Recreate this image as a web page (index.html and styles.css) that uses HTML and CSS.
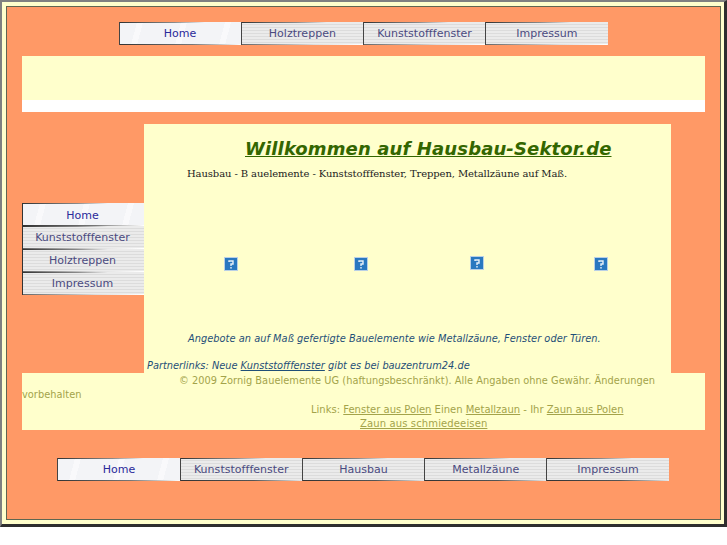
FILE: index.html

```html
<!DOCTYPE html>
<html lang="de">
<head>
    <meta charset="UTF-8">
    <title>Hausbau-Sektor.de</title>
    <link rel="stylesheet" href="styles.css">
</head>
<body>
    <div class="frame">
        <div class="page">
            <nav class="menu menu-top">
                <a class="tab active" href="#">Home</a>
                <a class="tab" href="#">Holztreppen</a>
                <a class="tab" href="#">Kunststofffenster</a>
                <a class="tab" href="#">Impressum</a>
            </nav>

            <div class="banner">
                <div class="banner-fill"></div>
            </div>

            <div class="middle">
                <nav class="menu-side">
                    <a class="tab active" href="#">Home</a>
                    <a class="tab" href="#">Kunststofffenster</a>
                    <a class="tab" href="#">Holztreppen</a>
                    <a class="tab" href="#">Impressum</a>
                </nav>

                <main class="content">
                    <h1 class="title">Willkommen auf Hausbau-Sektor.de</h1>
                    <p class="intro">Hausbau - B auelemente - Kunststofffenster, Treppen, Metallzäune auf Maß.</p>

                    <div class="pictures">
                        <svg class="broken" width="14" height="14" viewBox="0 0 14 14"><rect x="0.5" y="0.5" width="13" height="13" fill="#2a78c0" stroke="#b9d0e6"/><path d="M5 5V4h4v3H7v2" fill="none" stroke="#e8f0f8" stroke-width="1.4"/><rect x="6.3" y="10" width="1.4" height="1.6" fill="#e8f0f8"/></svg>
                        <svg class="broken" width="14" height="14" viewBox="0 0 14 14"><rect x="0.5" y="0.5" width="13" height="13" fill="#2a78c0" stroke="#b9d0e6"/><path d="M5 5V4h4v3H7v2" fill="none" stroke="#e8f0f8" stroke-width="1.4"/><rect x="6.3" y="10" width="1.4" height="1.6" fill="#e8f0f8"/></svg>
                        <svg class="broken raised" width="14" height="14" viewBox="0 0 14 14"><rect x="0.5" y="0.5" width="13" height="13" fill="#2a78c0" stroke="#b9d0e6"/><path d="M5 5V4h4v3H7v2" fill="none" stroke="#e8f0f8" stroke-width="1.4"/><rect x="6.3" y="10" width="1.4" height="1.6" fill="#e8f0f8"/></svg>
                        <svg class="broken" width="14" height="14" viewBox="0 0 14 14"><rect x="0.5" y="0.5" width="13" height="13" fill="#2a78c0" stroke="#b9d0e6"/><path d="M5 5V4h4v3H7v2" fill="none" stroke="#e8f0f8" stroke-width="1.4"/><rect x="6.3" y="10" width="1.4" height="1.6" fill="#e8f0f8"/></svg>
                    </div>

                    <p class="offer">Angebote an auf Maß gefertigte Bauelemente wie Metallzäune, Fenster oder Türen.</p>
                    <p class="partner">Partnerlinks: Neue <a href="#">Kunststofffenster</a> gibt es bei bauzentrum24.de</p>
                </main>
            </div>

            <footer class="footer">
                <p class="copyright">© 2009 Zornig Bauelemente UG (haftungsbeschränkt). Alle Angaben ohne Gewähr. Änderungen vorbehalten</p>
                <p class="links">Links: <a href="#">Fenster aus Polen</a> Einen <a href="#">Metallzaun</a> - Ihr <a href="#">Zaun aus Polen</a></p>
                <p class="links-more"><a href="#">Zaun aus schmiedeeisen</a></p>
            </footer>

            <nav class="menu menu-bottom">
                <a class="tab active" href="#">Home</a>
                <a class="tab" href="#">Kunststofffenster</a>
                <a class="tab" href="#">Hausbau</a>
                <a class="tab" href="#">Metallzäune</a>
                <a class="tab" href="#">Impressum</a>
            </nav>
        </div>
    </div>
</body>
</html>
```

FILE: styles.css

```css
* {
    margin: 0;
    padding: 0;
    box-sizing: border-box;
}

body {
    background: #ffffff;
    font-family: "DejaVu Sans", sans-serif;
}

.frame {
    width: 727px;
    height: 527px;
    background: #ffffcc;
    border-style: solid;
    border-width: 2px 3px 3px 2px;
    border-color: #808080 #2e2e2e #2e2e2e #808080;
    padding: 4px 3px 4px 4px;
}

.page {
    height: 100%;
    background: #ff9966;
    border: 1px solid #5f6650;
    padding: 15px 15px 0;
}

.menu {
    display: flex;
    justify-content: center;
    height: 23px;
    padding-right: 1px;
}

.menu-bottom {
    margin-top: 28px;
}

.tab {
    display: flex;
    align-items: center;
    justify-content: center;
    width: 122.25px;
    height: 23px;
    font-size: 11px;
    letter-spacing: 0.03px;
    color: #4a4a80;
    text-decoration: none;
    border-left: 1px solid #444444;
    background:
        linear-gradient(90deg, #333333 0, #8a8a8a 45%, rgba(255, 255, 255, 0) 70%) top / 100% 1px no-repeat,
        linear-gradient(90deg, #666666 0, #dddddd 60%, #ffffff 100%) bottom / 100% 1px no-repeat,
        repeating-linear-gradient(180deg, #ebebeb 0, #ebebeb 2px, #dcdcdc 2px, #dcdcdc 3px);
}

.menu-bottom .tab {
    background:
        linear-gradient(90deg, #333333 0, #8a8a8a 45%, rgba(255, 255, 255, 0) 70%) top / 100% 1px no-repeat,
        linear-gradient(90deg, #333333 0, #555555 60%, #e8e8e8 100%) bottom / 100% 1px no-repeat,
        repeating-linear-gradient(180deg, #ebebeb 0, #ebebeb 2px, #dcdcdc 2px, #dcdcdc 3px);
}

/* faint white streaks on the selected tab */
.tab.active,
.menu-bottom .tab.active {
    color: #2a2a9a;
    background:
        linear-gradient(90deg, #333333 0, #8a8a8a 45%, rgba(255, 255, 255, 0) 70%) top / 100% 1px no-repeat,
        linear-gradient(90deg, #333333 0, #777777 60%, #ffffff 100%) bottom / 100% 1px no-repeat,
        linear-gradient(105deg, transparent 35%, #f9f9fb 35%, #f9f9fb 65%, transparent 65%) 10px 0 / 14px 100% no-repeat,
        linear-gradient(105deg, transparent 35%, #f9f9fb 35%, #f9f9fb 65%, transparent 65%) 54px 0 / 14px 100% no-repeat,
        linear-gradient(105deg, transparent 35%, #f9f9fb 35%, #f9f9fb 65%, transparent 65%) 98px 0 / 14px 100% no-repeat,
        #f3f4f7;
}

.banner {
    height: 56px;
    margin-top: 11px;
    background: #ffffff;
}

.banner-fill {
    height: 44px;
    background: #ffffcc;
}

.middle {
    display: flex;
    margin-top: 12px;
    height: 249px;
}

.menu-side {
    width: 122px;
    margin-top: 79px;
}

.menu-side .tab {
    width: 122px;
    border-left: 1px solid #333333;
    padding-right: 2px;
}

.menu-side .tab.active {
    padding-top: 1px;
}

.content {
    width: 527px;
    background: #ffffcc;
}

.title {
    margin: 15px 0 0 101px;
    font-size: 18px;
    line-height: 20px;
    letter-spacing: 0.13px;
    font-style: italic;
    font-weight: bold;
    white-space: nowrap;
    color: #336600;
    text-decoration: underline;
}

.intro {
    margin: 8px 0 0 43px;
    font-family: "DejaVu Serif", serif;
    font-size: 10px;
    line-height: 14px;
    letter-spacing: -0.1px;
    color: #222222;
    white-space: nowrap;
}

.pictures {
    display: grid;
    grid-template-columns: 130px 116px 124px 14px;
    align-items: center;
    height: 16px;
    margin: 75px 0 0 80px;
}

.broken.raised {
    margin-top: -2px;
}

.offer {
    margin-top: 60px;
    padding-left: 44px;
    font-size: 9.8px;
    line-height: 14px;
    letter-spacing: 0.04px;
    font-style: italic;
    color: #1f4f78;
    white-space: nowrap;
}

.partner {
    margin-top: 13px;
    padding-left: 3px;
    font-size: 9.8px;
    line-height: 14px;
    font-style: italic;
    color: #1f4f78;
    white-space: nowrap;
}

.partner a {
    color: #1f4f78;
}

.footer {
    height: 57px;
    background: #ffffcc;
    font-size: 10px;
    line-height: 14px;
    color: #a3a34a;
}

.copyright {
    font-size: 9.8px;
    letter-spacing: 0.04px;
    text-indent: 157px;
    padding-top: 1px;
}

.links {
    margin-top: 1px;
    padding-left: 289px;
}

.links-more {
    padding-left: 338px;
    letter-spacing: 0.13px;
}

.footer a {
    color: #a3a34a;
}
```
